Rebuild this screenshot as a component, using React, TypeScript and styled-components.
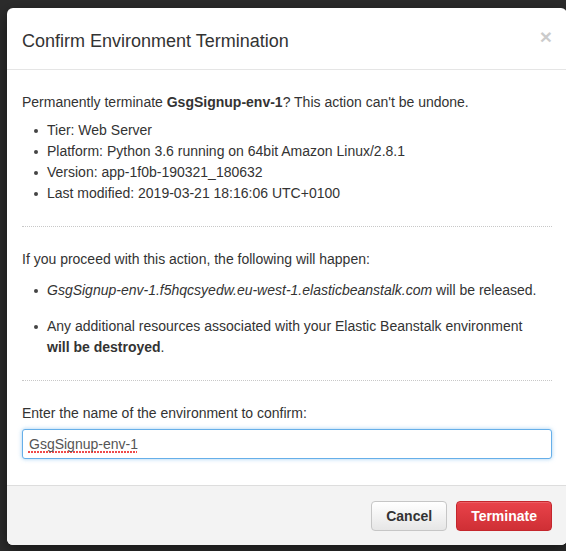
import React from "react";
import styled, { createGlobalStyle } from "styled-components";

const Global = createGlobalStyle`
  html, body { margin: 0; padding: 0; }
  body {
    background: #2c2c2c;
    font-family: "Liberation Sans", Arial, Helvetica, sans-serif;
    color: #333;
    font-size: 14px;
    line-height: 21px;
  }
`;

const Page = styled.div`
  min-height: 551px;
  height: 551px;
  padding: 8px 0 0 7px;
  box-sizing: border-box;
  overflow: hidden;
  background: #2c2c2c;
`;

const Modal = styled.div`
  width: 560px;
  background: #fff;
  border-radius: 6px;
  overflow: hidden;
  box-shadow: 0 5px 15px rgba(0, 0, 0, 0.5);
`;

const Header = styled.div`
  display: flex;
  justify-content: space-between;
  align-items: flex-start;
  padding: 20px 15px 15px;
  border-bottom: 1px solid #e5e5e5;
`;

const Title = styled.h4`
  margin: 0;
  font-size: 18px;
  line-height: 26px;
  font-weight: normal;
  color: #333;
`;

const Close = styled.button`
  border: 0;
  background: transparent;
  padding: 0;
  margin-top: -2px;
  font-family: "Liberation Sans", Arial, sans-serif;
  font-size: 21px;
  font-weight: bold;
  line-height: 1;
  color: #000;
  opacity: 0.2;
  cursor: pointer;
`;

const Body = styled.div`
  padding: 0 15px;
`;

const Section = styled.div<{ $last?: boolean; $bottom?: number }>`
  padding: 22px 0 ${(p) => p.$bottom ?? 22}px;
  border-bottom: ${(p) => (p.$last ? "none" : "1px dotted #c8c8c8")};
`;

const Lead = styled.p<{ $gap: number }>`
  margin: 0 0 ${(p) => p.$gap}px;
`;

const List = styled.ul<{ $spacing?: number }>`
  margin: 0;
  padding: 0 0 0 25px;
  list-style: none;
  li + li {
    margin-top: ${(p) => p.$spacing ?? 0}px;
  }
`;

const Item = styled.li`
  position: relative;
  &::before {
    content: "";
    position: absolute;
    left: -13px;
    top: 9px;
    width: 4px;
    height: 4px;
    border-radius: 50%;
    background: #444;
  }
`;

const Label = styled.label`
  display: block;
  margin-bottom: 5px;
`;

const Input = styled.input`
  display: block;
  width: 100%;
  box-sizing: border-box;
  height: 30px;
  margin: 0;
  padding: 0 6px;
  border: 1px solid #66afe9;
  border-radius: 3px;
  box-shadow: 0 0 4px rgba(102, 175, 233, 0.6);
  outline: none;
  font-family: "Liberation Sans", Arial, sans-serif;
  font-size: 14px;
  color: #555;
  /* spell-check squiggle under the typed value */
  background: #fff
    repeating-linear-gradient(to right, #ef4a4a 0 2px, transparent 2px 3px)
    no-repeat 5px 21px / 109px 2px;
`;

const Footer = styled.div`
  display: flex;
  justify-content: flex-end;
  gap: 9px;
  padding: 15px 15px 14px;
  background: #f3f3f3;
  border-top: 1px solid #ddd;
`;

const Button = styled.button<{ $danger?: boolean }>`
  height: 30px;
  padding: 0 14px;
  border-radius: 4px;
  font-family: "Liberation Sans", Arial, sans-serif;
  font-size: 14px;
  font-weight: bold;
  cursor: pointer;
  color: ${(p) => (p.$danger ? "#fff" : "#333")};
  border: 1px solid ${(p) => (p.$danger ? "#c4262c" : "#c6c6c6")};
  background: ${(p) =>
    p.$danger
      ? "linear-gradient(#e9434a, #cf2f35)"
      : "linear-gradient(#ffffff, #e6e6e6)"};
  box-shadow: inset 0 1px 0 rgba(255, 255, 255, 0.15);
`;

export default function App() {
  return (
    <>
      <Global />
      <Page>
        <Modal>
          <Header>
            <Title>Confirm Environment Termination</Title>
            <Close aria-label="Close">×</Close>
          </Header>
          <Body>
            <Section>
              <Lead $gap={7}>
                Permanently terminate <strong>GsgSignup-env-1</strong>? This
                action can't be undone.
              </Lead>
              <List>
                <Item>Tier: Web Server</Item>
                <Item>Platform: Python 3.6 running on 64bit Amazon Linux/2.8.1</Item>
                <Item>Version: app-1f0b-190321_180632</Item>
                <Item>Last modified: 2019-03-21 18:16:06 UTC+0100</Item>
              </List>
            </Section>
            <Section>
              <Lead $gap={10}>
                If you proceed with this action, the following will happen:
              </Lead>
              <List $spacing={15}>
                <Item>
                  <em>GsgSignup-env-1.f5hqcsyedw.eu-west-1.elasticbeanstalk.com</em>{" "}
                  will be released.
                </Item>
                <Item>
                  Any additional resources associated with your Elastic
                  Beanstalk environment
                  <br />
                  <strong>will be destroyed</strong>.
                </Item>
              </List>
            </Section>
            <Section $last $bottom={26}>
              <Label htmlFor="env-name">
                Enter the name of the environment to confirm:
              </Label>
              <Input id="env-name" defaultValue="GsgSignup-env-1" spellCheck={false} />
            </Section>
          </Body>
          <Footer>
            <Button>Cancel</Button>
            <Button $danger>Terminate</Button>
          </Footer>
        </Modal>
      </Page>
    </>
  );
}
